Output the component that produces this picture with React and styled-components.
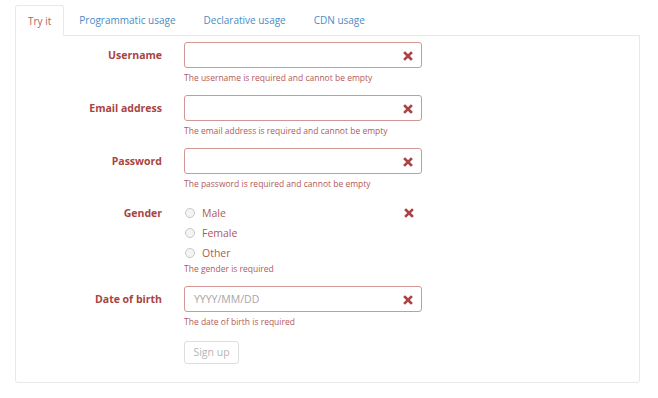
import styled, {createGlobalStyle} from "styled-components";

const GlobalStyle = createGlobalStyle`
  body {
    margin: 0;
    background: #fff;
    font-family: "Open Sans", "Liberation Sans", sans-serif;
  }
`;

const Page = styled.div`
  padding: 5px 18px 0 15px;
  width: 625px;
`;

const TabList = styled.ul`
  display: flex;
  list-style: none;
  margin: 0;
  padding: 0;
  height: 30px;
`;

const Tab = styled.li`
  padding: 0 12px;
  margin-right: 2px;
  height: ${(p) => (p.$active ? "31px" : "30px")};
  box-sizing: border-box;
  display: flex;
  align-items: center;
  font-size: 10px;
  color: ${(p) => (p.$active ? "#b0605e" : "#4a8bc4")};
  border: 1px solid ${(p) => (p.$active ? "#e8e8e8" : "transparent")};
  border-bottom-color: ${(p) => (p.$active ? "#fff" : "transparent")};
  border-radius: 3px 3px 0 0;
  background: #fff;
  position: relative;
  z-index: 1;
`;

const Panel = styled.div`
  border: 1px solid #e8e8e8;
  border-radius: 0 0 3px 3px;
  height: 348px;
  box-sizing: border-box;
  padding-top: 6px;
`;

const Row = styled.div`
  display: grid;
  grid-template-columns: 146px 238px;
  column-gap: 22px;
  margin-bottom: 11px;
`;

const Label = styled.label`
  text-align: right;
  font-weight: 700;
  font-size: 10.5px;
  color: #a94442;
  line-height: ${(p) => p.$lh || "27px"};
`;

const Field = styled.div`
  display: flex;
  flex-direction: column;
`;

const InputWrap = styled.div`
  position: relative;
  height: 26px;
  box-sizing: border-box;
  border: 1px solid #d39694;
  border-radius: 3px;
  display: flex;
  align-items: center;
  padding: 0 9px;
  font-size: 10.5px;
  color: #a5a5a5;
`;

const Cross = styled.svg`
  position: absolute;
  right: 8px;
  top: ${(p) => p.$top || "8px"};
`;

const Help = styled.div`
  margin-top: ${(p) => p.$mt || "4px"};
  font-size: 8.5px;
  line-height: 12px;
  color: #b25a58;
`;

const RadioGroup = styled.div`
  position: relative;
  display: flex;
  flex-direction: column;
  padding-top: 2px;
`;

const RadioItem = styled.div`
  height: 20px;
  display: flex;
  align-items: center;
  font-size: 10.5px;
  color: #b05957;
  padding-left: 1px;
`;

const RadioDot = styled.span`
  width: 8px;
  height: 8px;
  border-radius: 50%;
  border: 1px solid #c8c8c8;
  background: #f4f4f4;
  margin-right: 7px;
`;

const Button = styled.button`
  width: 55px;
  height: 23px;
  margin-top: -1px;
  border: 1px solid #dedede;
  border-radius: 3px;
  background: #fff;
  color: #b5b5b5;
  font-family: inherit;
  font-size: 10.5px;
  padding: 0;
`;

const XIcon = ({top}) => (
  <Cross $top={top} width="10" height="10" viewBox="0 0 10 10">
    <path d="M2 2L8 8M8 2L2 8" stroke="#a94442" strokeWidth="2.6" strokeLinecap="square"/>
  </Cross>
);

const textFields = [
  {label: "Username", help: "The username is required and cannot be empty"},
  {label: "Email address", help: "The email address is required and cannot be empty"},
  {label: "Password", help: "The password is required and cannot be empty"},
];

const App = () => (
  <Page>
    <GlobalStyle/>
    <TabList>
      <Tab $active>Try it</Tab>
      <Tab>Programmatic usage</Tab>
      <Tab>Declarative usage</Tab>
      <Tab>CDN usage</Tab>
    </TabList>
    <Panel>
      {textFields.map((f) => (
        <Row key={f.label}>
          <Label>{f.label}</Label>
          <Field>
            <InputWrap><XIcon/></InputWrap>
            <Help>{f.help}</Help>
          </Field>
        </Row>
      ))}
      <Row>
        <Label $lh="24px">Gender</Label>
        <Field>
          <RadioGroup>
            {["Male", "Female", "Other"].map((g) => (
              <RadioItem key={g}><RadioDot/>{g}</RadioItem>
            ))}
            <XIcon top="7px"/>
          </RadioGroup>
          <Help $mt="0px">The gender is required</Help>
        </Field>
      </Row>
      <Row>
        <Label>Date of birth</Label>
        <Field>
          <InputWrap>YYYY/MM/DD<XIcon/></InputWrap>
          <Help>The date of birth is required</Help>
        </Field>
      </Row>
      <Row>
        <span/>
        <div><Button>Sign up</Button></div>
      </Row>
    </Panel>
  </Page>
);

export default App;
